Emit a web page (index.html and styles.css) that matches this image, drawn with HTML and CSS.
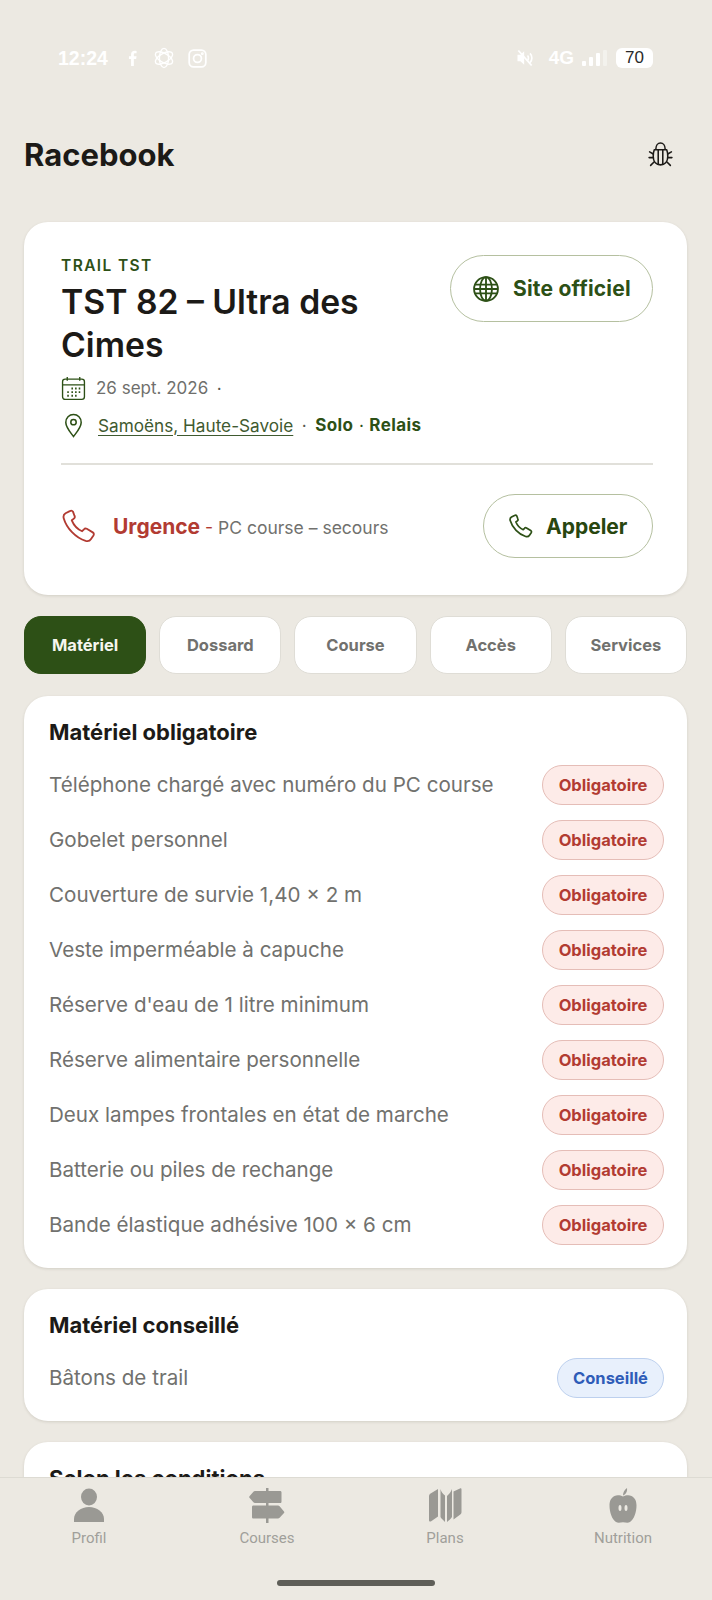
FILE: index.html
```html
<!DOCTYPE html>
<html lang="fr">
<head>
    <meta charset="utf-8">
    <title>Racebook</title>
    <link rel="stylesheet" href="styles.css">
</head>
<body>
<div class="app">
    <div class="status-bar">
        <div class="status-left">
            <span class="clock">12:24</span>
            <svg class="st-fb" viewBox="0 0 10 18" fill="#fff"><path d="M6.5 18V10h2.600l.5-3H6.500V5.200c0-.9.4-1.500 1.600-1.500h1.500V1C9.200.9 8.300.800 7.400.800 5 .800 3.400 2.200 3.400 4.800V7H1v3h2.400v8z"/></svg>
            <svg class="st-icon st-knot" viewBox="0 0 24 24" fill="none" stroke="#fff" stroke-width="1.500"><ellipse cx="12" cy="12" rx="5" ry="10.500"/><ellipse cx="12" cy="12" rx="5" ry="10.500" transform="rotate(60 12 12)"/><ellipse cx="12" cy="12" rx="5" ry="10.500" transform="rotate(120 12 12)"/></svg>
            <svg class="st-icon" viewBox="0 0 24 24" fill="none" stroke="#fff" stroke-width="2"><rect x="2.500" y="2.500" width="19" height="19" rx="5"/><circle cx="12" cy="12" r="4.500"/><circle cx="17.500" cy="6.500" r=".6" fill="#fff"/></svg>
        </div>
        <div class="status-right">
            <svg class="st-mute" viewBox="0 0 24 24" fill="#fff"><path d="M11 4 6.500 8H3v8h3.500l4.500 4z"/><path d="M15 9c1.500 1.500 1.500 4.500 0 6M18 6.500c3 3 3 8 0 11" fill="none" stroke="#fff" stroke-width="2"/><path d="M4 3l16 18" stroke="#fff" stroke-width="2.200"/></svg>
            <span class="network">4G</span>
            <span class="signal"><i class="b1"></i><i class="b2"></i><i class="b3"></i><i class="b4"></i></span>
            <span class="battery">70</span>
        </div>
    </div>

    <header class="topbar">
        <h1>Racebook</h1>
        <svg class="bug" viewBox="0 0 24 26" fill="none" stroke="#1c1a17" stroke-width="1.500" stroke-linecap="round" stroke-linejoin="round">
            <path d="M7.500 8c0-3.500 2-6 4.500-6s4.500 2.500 4.500 6"/>
            <path d="M6 8.500h12c.8 2 1 4 1 6.500 0 5-3 8-7 8s-7-3-7-8c0-2.500.2-4.500 1-6.500z"/>
            <path d="M9.800 8.500v14M14.200 8.500v14M5 12.500 1.500 10.500M19 12.500l3.500-2M5 16H1M19 16h4M6 20l-3.500 3.500M18 20l3.500 3.500"/>
        </svg>
    </header>

    <main class="content">
        <section class="card hero">
            <div class="hero-top">
                <div class="hero-title">
                    <div class="eyebrow">TRAIL TST</div>
                    <h2>TST 82 – Ultra des Cimes</h2>
                </div>
                <a class="pill site-btn">
                    <svg class="globe" viewBox="0 0 24 24" fill="none" stroke="#2d5016" stroke-width="1.700"><circle cx="12" cy="12" r="11"/><ellipse cx="12" cy="12" rx="5.500" ry="11"/><path d="M12 1v22M2 8h20M2 16h20M1 12h22"/></svg>
                    Site officiel
                </a>
            </div>
            <div class="meta-row date-row">
                <svg class="meta-icon" viewBox="0 0 24 24" fill="none" stroke="#2d5016" stroke-width="1.300"><rect x="1.500" y="3" width="21" height="19.500" rx="2.500"/><path d="M1.500 8.500h21M6 1v3.500M18 1v3.500"/><path d="M10 12h1.500M13.500 12H15M17 12h1.500M6 15.500h1.500M10 15.500h1.500M13.500 15.500H15M17 15.500h1.500M6 19h1.500M10 19h1.500M13.500 19H15" stroke-width="1.800"/></svg>
                <span>26 sept. 2026</span>
                <span class="dot">•</span>
            </div>
            <div class="meta-row place-row">
                <svg class="meta-icon pin" viewBox="0 0 20 26" fill="none" stroke="#2d5016" stroke-width="1.600"><path d="M10 24.500C5.500 18.500 2 14.500 2 9.800 2 5 5.500 1.500 10 1.500s8 3.500 8 8.300c0 4.700-3.500 8.700-8 14.700z"/><circle cx="10" cy="9.500" r="2.800"/></svg>
                <a class="place">Samoëns, Haute-Savoie</a>
                <span class="dot">•</span>
                <strong>Solo</strong>
                <span class="dot green">•</span>
                <strong>Relais</strong>
            </div>
            <div class="hero-sep"></div>
            <div class="urgent-row">
                <svg class="phone phone-red" viewBox="0 0 24 24" fill="none" stroke="#b23b32" stroke-width="1.300" stroke-linejoin="round"><path d="M5.500 1.500 2.500 3C1.200 3.800.800 5 1.200 6.500c2 7 8.500 14 15.500 16 1.600.4 3 0 3.800-1.300l1.700-2.500c.5-.8.300-1.700-.5-2.200l-4.200-2.500c-.7-.4-1.500-.3-2 .3l-1.300 1.400c-3-1.300-6-4.500-7.300-7.700l1.500-1.200c.6-.5.800-1.300.4-2L7.800 2c-.5-.8-1.500-1-2.300-.5z"/></svg>
                <div class="urgent-text"><b>Urgence</b><span class="urgent-dash"> - </span>PC course – secours</div>
                <a class="pill call-btn">
                    <svg class="phone phone-green" viewBox="0 0 24 24" fill="none" stroke="#2d5016" stroke-width="1.700" stroke-linejoin="round"><path d="M5.500 1.500 2.500 3C1.200 3.800.800 5 1.200 6.500c2 7 8.500 14 15.500 16 1.600.4 3 0 3.800-1.300l1.700-2.500c.5-.8.300-1.700-.5-2.200l-4.200-2.500c-.7-.4-1.500-.3-2 .3l-1.300 1.400c-3-1.300-6-4.500-7.300-7.700l1.500-1.200c.6-.5.800-1.300.4-2L7.800 2c-.5-.8-1.500-1-2.300-.5z"/></svg>
                    Appeler
                </a>
            </div>
        </section>

        <nav class="tabs">
            <a class="tab active">Matériel</a>
            <a class="tab">Dossard</a>
            <a class="tab">Course</a>
            <a class="tab">Accès</a>
            <a class="tab">Services</a>
        </nav>

        <section class="card list-card">
            <h3>Matériel obligatoire</h3>
            <div class="item"><span>Téléphone chargé avec numéro du PC course</span><span class="badge required">Obligatoire</span></div>
            <div class="item"><span>Gobelet personnel</span><span class="badge required">Obligatoire</span></div>
            <div class="item"><span>Couverture de survie 1,40 × 2 m</span><span class="badge required">Obligatoire</span></div>
            <div class="item"><span>Veste imperméable à capuche</span><span class="badge required">Obligatoire</span></div>
            <div class="item"><span>Réserve d'eau de 1 litre minimum</span><span class="badge required">Obligatoire</span></div>
            <div class="item"><span>Réserve alimentaire personnelle</span><span class="badge required">Obligatoire</span></div>
            <div class="item"><span>Deux lampes frontales en état de marche</span><span class="badge required">Obligatoire</span></div>
            <div class="item"><span>Batterie ou piles de rechange</span><span class="badge required">Obligatoire</span></div>
            <div class="item"><span>Bande élastique adhésive 100 × 6 cm</span><span class="badge required">Obligatoire</span></div>
        </section>

        <section class="card list-card">
            <h3>Matériel conseillé</h3>
            <div class="item"><span>Bâtons de trail</span><span class="badge advised">Conseillé</span></div>
        </section>

        <section class="card list-card">
            <h3>Selon les conditions</h3>
        </section>
    </main>

    <footer class="bottom-nav">
        <div class="nav-items">
            <a class="nav-item">
                <svg viewBox="0 0 36 35" fill="#9a9994"><ellipse cx="18" cy="9" rx="8" ry="8.500"/><path d="M3 34v-3c0-7 7-12 15-12s15 5 15 12v3z"/></svg>
                Profil
            </a>
            <a class="nav-item">
                <svg viewBox="0 0 36 35" fill="#9a9994"><path d="M17 0h2.500v35H17z"/><path d="M6 3c-.6 0-1.200.2-1.600.7L.5 8.200c-.4.500-.4 1.100 0 1.600l3.900 4.500c.4.500 1 .7 1.600.7h25c1 0 1.500-.5 1.500-1.500V4.500c0-1-.5-1.500-1.500-1.500z"/><path d="M4.500 17.500C3.500 17.500 3 18 3 19v10c0 1 .5 1.500 1.500 1.500H29c.6 0 1.200-.2 1.600-.7l4.400-4.800c.4-.5.4-1.100 0-1.600l-4.400-5.200c-.4-.5-1-.7-1.600-.7z"/></svg>
                Courses
            </a>
            <a class="nav-item">
                <svg viewBox="0 0 36 35" fill="#9a9994"><path d="M2 8c0-1 .4-1.700 1.200-2.300L11 1v27.500l-6.800 4.800C3 34 2 33.500 2 32z"/><path d="M13.500 1c.6 3 2.500 5 4.500 6.500V34c-2-2-3.700-3.500-4.500-5z"/><path d="M20 8c2-1.800 4-4 5-7v28c-1.500 2-3 3.500-5 5z"/><path d="M27.500 3.500 34 .5c1-.4 1.500 0 1.500 1v22.800c0 1-.4 1.700-1.200 2.200l-6.800 5z" transform="translate(-1 0)"/></svg>
                Plans
            </a>
            <a class="nav-item">
                <svg viewBox="0 0 36 35" fill-rule="evenodd" fill="#9a9994"><path d="M18 8.500c2.500-1.300 6-1.800 8.500-.5 3.600 1.800 5 5.300 5 9.500 0 6.500-2.500 14-6.500 16.500-2.500 1.300-4.500.2-7 .2s-4.500 1.100-7-.2c-4-2.500-6.500-10-6.500-16.500 0-4.200 1.400-7.700 5-9.500 2.500-1.300 6-.8 8.500.5zM15 17c-1 0-1.500 1.200-1.500 3s.5 3 1.500 3 1.500-1.200 1.500-3-.5-3-1.500-3zm6 0c-1 0-1.500 1.200-1.500 3s.5 3 1.500 3 1.500-1.200 1.500-3-.5-3-1.500-3z"/><path d="M18 7.500c0-3 1.500-5.800 4-7.500.5 3-1 6.500-4 7.500z"/></svg>
                Nutrition
            </a>
        </div>
        <div class="home-bar"></div>
    </footer>
</div>
</body>
</html>
```

FILE: styles.css
```css
* {
    box-sizing: border-box;
}

body {
    margin: 0;
    font-family: Inter, "Noto Sans", sans-serif;
    background-color: #ece9e2;
    color: #1c1a17;
}

.app {
    position: relative;
    height: 1600px;
    overflow: hidden;
}

/* status bar */
.status-bar {
    display: flex;
    justify-content: space-between;
    align-items: center;
    height: 30px;
    margin-top: 43px;
    padding: 0 59px 0 58px;
    font-family: "Liberation Sans", Arial, sans-serif;
    color: #fff;
}

.status-left,
.status-right {
    display: flex;
    align-items: center;
}

.clock {
    font-size: 19.500px;
    font-weight: 700;
    margin-right: 20px;
}

.st-fb {
    width: 9px;
    height: 16px;
    margin-right: 16px;
}

.st-icon {
    width: 21px;
    height: 21px;
    margin-right: 12px;
}

.st-knot {
    width: 22px;
    height: 22px;
}

.st-mute {
    width: 20px;
    height: 20px;
    margin-right: 14px;
}

.network {
    font-size: 19px;
    font-weight: 700;
    margin-right: 8px;
}

.signal {
    display: flex;
    align-items: flex-end;
    gap: 3px;
    height: 16px;
    margin-right: 9px;
}

.signal i {
    width: 4px;
    background-color: #fff;
    border-radius: 1px;
}

.signal .b1 { height: 5px; }
.signal .b2 { height: 9px; }
.signal .b3 { height: 13px; }
.signal .b4 { height: 16px; opacity: 0.4; }

.battery {
    width: 37px;
    height: 20px;
    border-radius: 6px;
    background-color: #fff;
    color: #2a2a2a;
    font-size: 17px;
    font-weight: 400;
    line-height: 20px;
    text-align: center;
}

/* header */
.topbar {
    display: flex;
    justify-content: space-between;
    align-items: center;
    height: 40px;
    margin-top: 61px;
    padding: 0 39px 0 24px;
}

h1 {
    margin: 0;
    font-size: 31px;
    font-weight: 700;
}

.bug {
    width: 25px;
    height: 27px;
}

.content {
    display: flex;
    flex-direction: column;
    gap: 21px;
    padding: 0 25px 0 24px;
    margin-top: 48px;
}

.card {
    background-color: #fff;
    border-radius: 24px;
    box-shadow: 0 1px 3px rgba(60, 50, 30, 0.14);
}

/* hero */
.hero {
    height: 373px;
    padding: 33px 34px 0 37px;
}

.hero-top {
    display: flex;
    justify-content: space-between;
    align-items: flex-start;
    height: 119px;
}

.eyebrow {
    font-size: 15.500px;
    font-weight: 600;
    letter-spacing: 1.400px;
    color: #2d5016;
    line-height: 21px;
}

h2 {
    width: 330px;
    margin: 4px 0 0;
    font-size: 33.700px;
    font-weight: 600;
    line-height: 43px;
}

.pill {
    display: flex;
    align-items: center;
    border: 1px solid #b5c0a0;
    border-radius: 34px;
    background-color: #fff;
    color: #2d5016;
    font-weight: 700;
}

.site-btn {
    height: 67px;
    width: 203px;
    padding-left: 22px;
    gap: 14px;
    font-size: 21px;
    letter-spacing: 0.200px;
}

.globe {
    width: 26px;
    height: 26px;
}

.meta-row {
    display: flex;
    align-items: center;
    font-size: 17px;
    color: #6f6f6c;
}

.date-row {
    height: 26px;
    margin-top: 1px;
}

.place-row {
    height: 26px;
    margin-top: 11px;
}

.meta-icon {
    width: 25px;
    height: 25px;
    margin-right: 10px;
    flex-shrink: 0;
}

.pin {
    margin-right: 12px;
}

.dot {
    font-size: 7px;
    margin-left: 9px;
    color: #55584f;
}

.place {
    font-size: 17.200px;
    color: #3f5a30;
    text-decoration: underline;
    text-underline-offset: 3px;
    text-decoration-thickness: 1px;
}

.place-row strong {
    margin-left: 9px;
    color: #2d5016;
    font-size: 17px;
    font-weight: 700;
    letter-spacing: 0.400px;
}

.dot.green {
    color: #2d5016;
    margin-left: 6px;
}

.place-row .dot.green + strong {
    margin-left: 6px;
}

.hero-sep {
    height: 2px;
    margin-top: 25px;
    background-color: #e1e0da;
}

.urgent-row {
    display: flex;
    align-items: center;
    height: 64px;
    margin-top: 29px;
}

.phone-red {
    width: 34px;
    height: 34px;
    margin-left: 1px;
    margin-right: 17px;
}

.urgent-text {
    flex: 1;
    font-size: 17.500px;
    color: #71716e;
}

.urgent-text b {
    font-size: 21px;
    font-weight: 700;
    color: #b23b32;
}

.urgent-dash {
    color: #b23b32;
}

.call-btn {
    height: 64px;
    width: 170px;
    padding-left: 25px;
    gap: 13px;
    font-size: 21px;
    color: #28460f;
}

.phone-green {
    width: 24px;
    height: 24px;
}

/* tabs */
.tabs {
    display: grid;
    grid-template-columns: repeat(5, 1fr);
    gap: 13px;
    margin-bottom: 1px;
}

.tab {
    display: flex;
    justify-content: center;
    align-items: center;
    height: 58px;
    background-color: #fff;
    border: 1px solid #dfddd6;
    border-radius: 17px;
    font-size: 16.500px;
    font-weight: 700;
    color: #71716e;
}

.tab.active {
    background-color: #2d5016;
    border-color: #2d5016;
    color: #f6f6ef;
}

/* lists */
.list-card {
    padding: 23px 23px 15px 25px;
}

h3 {
    margin: 0 0 13px;
    font-size: 22px;
    font-weight: 700;
    line-height: 26px;
}

.item {
    display: flex;
    justify-content: space-between;
    align-items: center;
    height: 55px;
    font-size: 20.600px;
    color: #71716e;
    padding-bottom: 2px;
}

.badge {
    display: flex;
    justify-content: center;
    align-items: center;
    height: 40px;
    border-radius: 20px;
    border: 1px solid;
    font-size: 16.500px;
    font-weight: 700;
}

.required {
    width: 122px;
    color: #b23b32;
    background-color: #fdebe8;
    border-color: #e5bdb7;
}

.advised {
    width: 107px;
    color: #2f5cb8;
    background-color: #e8f0fc;
    border-color: #bdd0ee;
}

/* bottom navigation lies over the scrolled content */
.bottom-nav {
    position: absolute;
    left: 0;
    right: 0;
    bottom: 0;
    height: 123px;
    background-color: #ece9e2;
    border-top: 1px solid #dddbd3;
}

.nav-items {
    display: grid;
    grid-template-columns: repeat(4, 1fr);
    padding-top: 10px;
}

.nav-item {
    display: flex;
    flex-direction: column;
    align-items: center;
    gap: 6px;
    font-family: Roboto, sans-serif;
    font-size: 15px;
    color: #a09f9a;
}

.nav-item svg {
    width: 36px;
    height: 35px;
}

.home-bar {
    position: absolute;
    left: 277px;
    bottom: 14px;
    width: 158px;
    height: 6px;
    border-radius: 3px;
    background-color: #5e5e58;
}
```
